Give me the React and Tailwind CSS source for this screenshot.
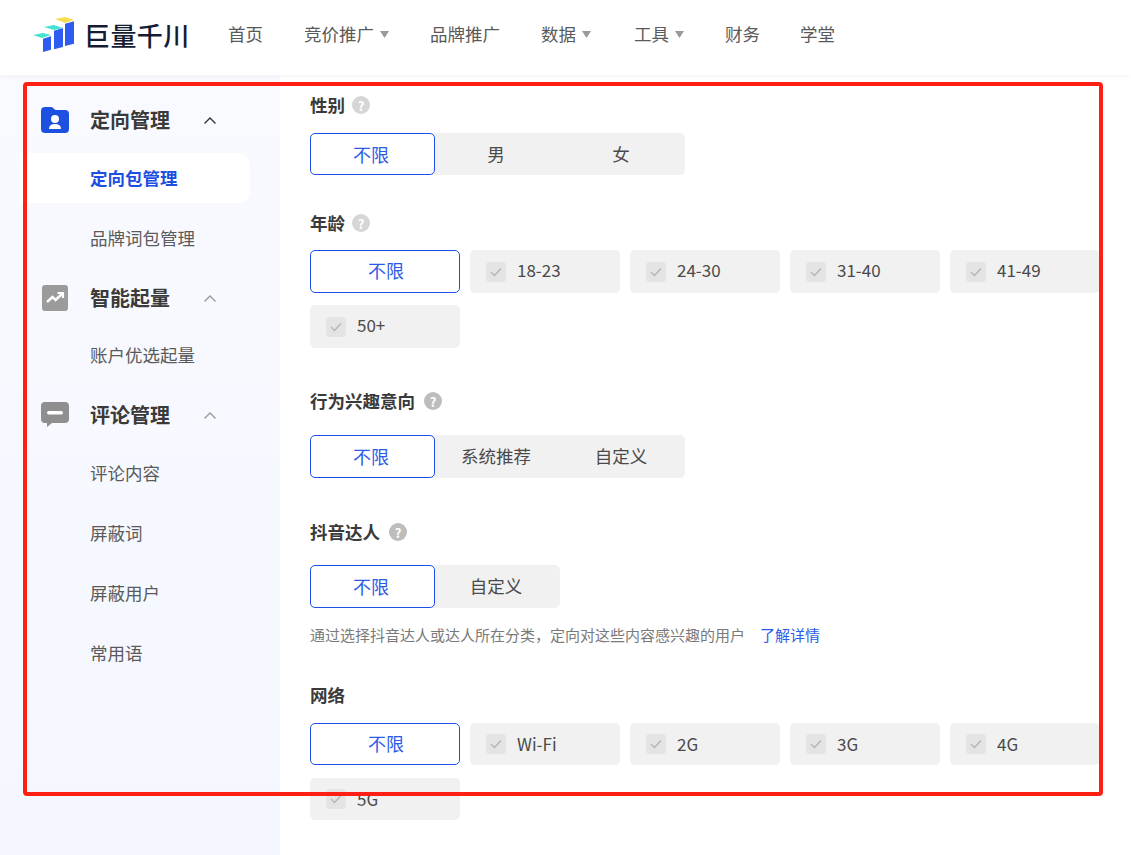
import React from "react";

const font = { fontFamily: '"Noto Sans CJK SC", "Noto Sans", sans-serif' };

function Logo() {
  return (
    <svg width="42" height="36" viewBox="0 0 42 36" className="shrink-0">
      <path d="M10 21.7 L18 19.3 L18 32.7 L10 35 Z" fill="#2f5cf0" />
      <path d="M21 13.7 L30 11 L30 30 L21 32.3 Z" fill="#2f5cf0" />
      <path d="M32 6.7 L41 4.3 L41 26.7 L32 29 Z" fill="#2f5cf0" />
      <path d="M0 18 L10 16 L18 18 L9 21 Z" fill="#43e3d3" />
      <path d="M11 10 L21 8 L30 11 L21 13 Z" fill="#43e3d3" />
      <path d="M22 2 L32 0 L41 3 L32 6 Z" fill="#f6dc4e" />
    </svg>
  );
}

function Caret() {
  return (
    <svg width="9" height="7" viewBox="0 0 9 7" className="ml-[6px]">
      <path d="M0 0 H9 L4.5 7 Z" fill="#9a9a9a" />
    </svg>
  );
}

function NavItem({ label, caret, className = "" }) {
  return (
    <div className={`flex items-center pb-[2px] text-[17.5px] text-[#5a5a5a] ${className}`}>
      {label}
      {caret && <Caret />}
    </div>
  );
}

function Chevron({ active }) {
  return (
    <svg width="14" height="9" viewBox="0 0 14 9" fill="none" className="ml-[33px]">
      <path d="M1.5 7.5 L7 2 L12.5 7.5" stroke={active ? "#333" : "#999"} strokeWidth="1.4" />
    </svg>
  );
}

function GroupHead({ icon, label, active, className = "" }) {
  return (
    <div className={`flex h-[60px] items-center pl-[41px] ${className}`}>
      <div className="flex w-[49px] shrink-0">{icon}</div>
      <span className="text-[20px] font-bold text-[#3a3a3a]">{label}</span>
      <Chevron active={active} />
    </div>
  );
}

function SubItem({ label, active, className = "" }) {
  return (
    <div
      className={`ml-[20px] flex h-[50px] w-[230px] items-center rounded-r-[12px] pl-[70px] text-[17.5px] ${
        active ? "bg-white font-bold text-[#1d4fe0]" : "text-[#5a5a5a]"
      } ${className}`}
    >
      {label}
    </div>
  );
}

function Help({ dark }) {
  return (
    <span
      className={`flex h-[18px] w-[18px] items-center justify-center rounded-full text-[13px] font-bold leading-none text-white ${
        dark ? "ml-[9px] bg-[#bdbdbd]" : "ml-[7px] bg-[#d6d6d6]"
      }`}
    >
      ?
    </span>
  );
}

function Label({ text, help = "light", className = "" }) {
  return (
    <div className={`flex h-[24px] items-center text-[17.5px] font-bold text-[#3a3a3a] ${className}`}>
      {text}
      {help && <Help dark={help === "dark"} />}
    </div>
  );
}

function Segmented({ items, short, className = "" }) {
  return (
    <div className={`flex w-fit rounded-[5px] bg-[#f1f1f1] ${className}`}>
      {items.map((item, i) => (
        <div
          key={item}
          className={`flex w-[125px] items-center justify-center rounded-[5px] pr-[3px] ${
            short ? "h-[42px]" : "h-[43px]"
          } ${i === 0 ? "border border-[#1d50ea] bg-white text-[18px] text-[#2a5be8]" : "text-[17.5px] text-[#4a4a4a]"}`}
        >
          {item}
        </div>
      ))}
    </div>
  );
}

function CheckTile({ label, short }) {
  return (
    <div
      className={`flex items-center rounded-[5px] bg-[#f1f1f1] pl-[16px] text-[17px] text-[#4a4a4a] ${
        short ? "h-[42px]" : "h-[43px]"
      }`}
    >
      <span className="mr-[11px] flex h-[20px] w-[20px] items-center justify-center rounded-[4px] bg-[#e4e4e4]">
        <svg width="14" height="12" viewBox="0 0 14 12" fill="none">
          <path d="M2 6 L5.5 9.5 L12 2.5" stroke="#b5b5b5" strokeWidth="1.3" />
        </svg>
      </span>
      <span className={short ? "pb-[1px]" : "pb-[3px]"}>{label}</span>
    </div>
  );
}

function CheckGrid({ items, short, className = "" }) {
  return (
    <div
      className={`grid w-[790px] grid-cols-[repeat(5,150px)] gap-x-[10px] ${
        short ? "gap-y-[13px]" : "gap-y-[12px]"
      } ${className}`}
    >
      <div
        className={`flex items-center justify-center rounded-[5px] border border-[#1d50ea] bg-white pl-[2px] text-[18px] text-[#2a5be8] ${
          short ? "h-[42px] pb-[1px]" : "h-[43px] pb-[3px]"
        }`}
      >
        不限
      </div>
      {items.map((item) => (
        <CheckTile key={item} label={item} short={short} />
      ))}
    </div>
  );
}

export default function App() {
  return (
    <div className="relative flex h-[855px] w-[1131px] flex-col overflow-hidden bg-white" style={font}>
      {/* header */}
      <header className="z-10 flex h-[75px] shrink-0 items-center bg-white pb-[5px] pl-[33px] shadow-[0_1px_6px_rgba(0,0,0,0.05)]">
        <Logo />
        <div className="ml-[9px] w-[144px] whitespace-nowrap text-[26px] font-medium leading-none tracking-[0.4px] text-[#141b33]">
          巨量千川
        </div>
        <NavItem label="首页" />
        <NavItem label="竞价推广" caret className="ml-[41px]" />
        <NavItem label="品牌推广" className="ml-[41px]" />
        <NavItem label="数据" caret className="ml-[41px]" />
        <NavItem label="工具" caret className="ml-[43px]" />
        <NavItem label="财务" className="ml-[41px]" />
        <NavItem label="学堂" className="ml-[40px]" />
      </header>

      <div className="flex flex-1">
        {/* sidebar */}
        <aside className="w-[280px] shrink-0 bg-gradient-to-b from-[#f9faff] to-[#f4f7ff] pt-[15px]">
          <GroupHead
            label="定向管理"
            active
            icon={
              <svg width="28" height="28" viewBox="0 0 28 28">
                <path d="M0 5 Q0 1 4 1 H10 Q12 1 13 3 Q14 4 16 4 H24 Q28 4 28 8 V23 Q28 27 24 27 H4 Q0 27 0 23 Z" fill="#1d4fe0" />
                <circle cx="14" cy="13" r="4" fill="#fff" />
                <path d="M8 23 Q8 18 14 18 Q20 18 20 23 Z" fill="#fff" />
              </svg>
            }
          />
          <SubItem label="定向包管理" active className="mt-[3px]" />
          <SubItem label="品牌词包管理" className="mt-[10px]" />
          <GroupHead
            label="智能起量"
            className="mt-[5px]"
            icon={
              <svg width="28" height="28" viewBox="0 0 28 28" fill="none">
                <rect x="1" y="1" width="26" height="26" rx="3" fill="#9b9b9b" />
                <path d="M6 18 L11.5 13 L14.5 16 L21 10" stroke="#fff" strokeWidth="2.4" />
                <path d="M16.5 9 H22 V14" stroke="#fff" strokeWidth="2.2" />
              </svg>
            }
          />
          <SubItem label="账户优选起量" className="mt-[2px]" />
          <GroupHead
            label="评论管理"
            className="mt-[5px]"
            icon={
              <svg width="28" height="26" viewBox="0 0 28 26">
                <path d="M4 0 H24 Q28 0 28 4 V17 Q28 21 24 21 H11 L6 25 V21 H4 Q0 21 0 17 V4 Q0 0 4 0 Z" fill="#8f8f8f" />
                <rect x="6" y="9" width="16" height="3.5" rx="1.7" fill="#fff" />
              </svg>
            }
          />
          <SubItem label="评论内容" className="mt-[3px]" />
          <SubItem label="屏蔽词" className="mt-[10px]" />
          <SubItem label="屏蔽用户" className="mt-[10px]" />
          <SubItem label="常用语" className="mt-[10px]" />
        </aside>

        {/* form */}
        <main className="flex-1 pl-[30px] pt-[18px]">
          <Label text="性别" />
          <Segmented items={["不限", "男", "女"]} short className="mt-[16px]" />
          <Label text="年龄" className="mt-[36px]" />
          <CheckGrid items={["18-23", "24-30", "31-40", "41-49", "50+"]} className="mt-[15px]" />
          <Label text="行为兴趣意向" help="dark" className="mt-[41px]" />
          <Segmented items={["不限", "系统推荐", "自定义"]} className="mt-[22px]" />
          <Label text="抖音达人" help="dark" className="mt-[42px]" />
          <Segmented items={["不限", "自定义"]} className="mt-[21px]" />
          <div className="mt-[17px] flex h-[20px] items-center text-[15px] text-[#7a7a7a]">
            通过选择抖音达人或达人所在分类，定向对这些内容感兴趣的用户
            <span className="ml-[15px] text-[#2a5be8]">了解详情</span>
          </div>
          <Label text="网络" help={null} className="mt-[38px]" />
          <CheckGrid items={["Wi-Fi", "2G", "3G", "4G", "5G"]} short className="mt-[16px]" />
        </main>
      </div>

      {/* red annotation frame */}
      <div className="pointer-events-none absolute left-[23px] top-[82px] z-20 h-[714px] w-[1080px] rounded-[4px] border-[4px] border-[#ff2015]" />
    </div>
  );
}
